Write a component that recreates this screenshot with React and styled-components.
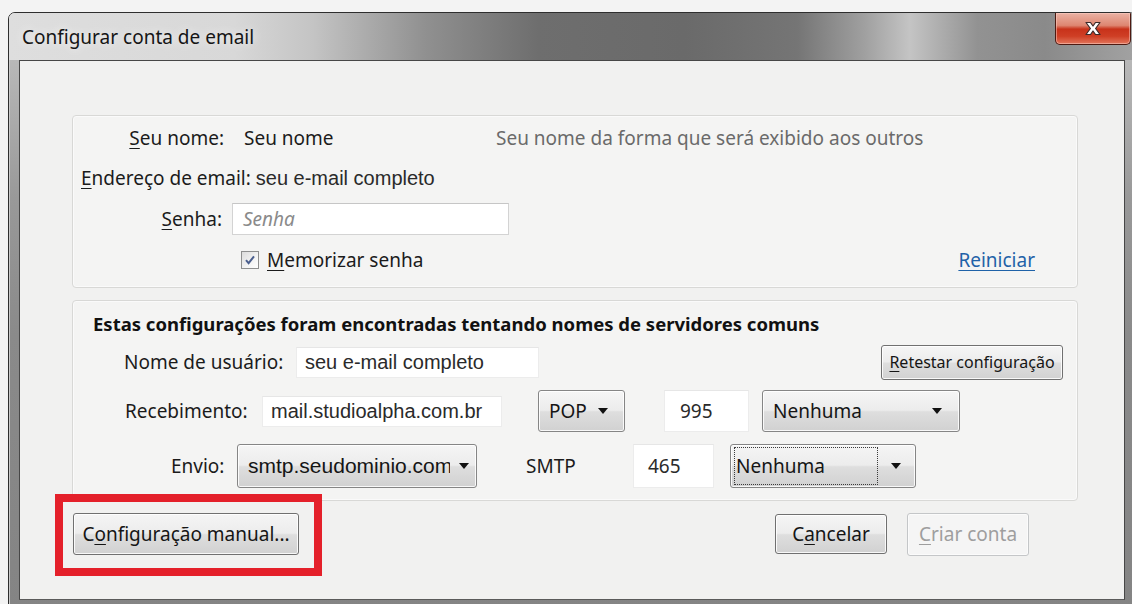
import React from 'react';
import styled, { createGlobalStyle } from 'styled-components';

const GlobalStyle = createGlobalStyle`
  html, body {
    margin: 0;
    padding: 0;
    background: #f3f3f3;
  }
  body {
    font-family: "Noto Sans", "Open Sans", sans-serif;
    overflow: hidden;
  }
`;

const Page = styled.div`
  width: 1132px;
  height: 604px;
  overflow: hidden;
  padding: 12px 0 0 8px;
  box-sizing: border-box;
`;

const DialogFrame = styled.div`
  width: 1128px;
  height: 600px;
  box-sizing: border-box;
  display: flex;
  flex-direction: column;
  border: 1px solid #2e2e2e;
  border-radius: 7px 7px 0 0;
  overflow: hidden;
`;

const TitleBar = styled.div`
  height: 47px;
  flex-shrink: 0;
  display: flex;
  justify-content: space-between;
  background: linear-gradient(90deg, #dedede 0%, #d8d8d8 20%, #c4c4c4 27%, #909090 37%, #6e6e6e 47%, #6a6a6a 60%, #757575 70%, #a0a0a0 76%, #c4c4c4 80%, #929292 86%, #8a8a8a 92%, #a2a2a2 100%);
`;

const FrameBody = styled.div`
  flex: 1;
  display: flex;
  padding: 0 10px 11px 10px;
  background: linear-gradient(180deg, #b8b8b8 0%, #999999 25%, #8a8a8a 50%, #848484 100%);
  box-shadow: inset 1px 0 0 #c9c9c9, inset -1px 0 0 #c9c9c9;
`;

const Title = styled.div`
  padding: 11px 0 0 13px;
  font-size: 19px;
  color: #151515;
  text-shadow: 0 0 10px rgba(255, 255, 255, 0.9);
`;

const CloseButton = styled.div`
  width: 76px;
  height: 32px;
  margin: 0 4px 0 0;
  box-sizing: border-box;
  display: flex;
  align-items: center;
  justify-content: center;
  border: 1px solid #4d1a12;
  border-top: none;
  border-radius: 0 0 5px 5px;
  background: linear-gradient(180deg, #eab2a4 0%, #de8671 40%, #c8321a 52%, #cf3f25 75%, #e2765c 100%);
  box-shadow: inset 0 0 0 1px rgba(255, 210, 200, 0.5);
`;

const Client = styled.div`
  flex: 1;
  border: 1px solid #474747;
  border-bottom-color: #5a5a5a;
  background: #f1f1f0;
  padding: 54px 46px 0 52px;
`;

const Group = styled.div`
  display: flex;
  flex-direction: column;
  border: 1px solid #d8d8d6;
  border-radius: 4px;
  background: #f4f4f3;
  box-shadow: inset 0 0 0 1px #fafafa;
  padding: ${p => p.$pad};
  margin-bottom: ${p => p.$gap || 0}px;
`;

const Row = styled.div`
  display: flex;
  align-items: center;
  height: ${p => p.$h}px;
  padding-left: ${p => p.$indent || 0}px;
  font-size: 19px;
  color: #1b1b1b;
`;

const FieldLabel = styled.span`
  flex-shrink: 0;
  width: ${p => p.$w}px;
  text-align: ${p => (p.$right ? 'right' : 'left')};
  padding-right: ${p => (p.$right ? 10 : 0)}px;
  box-sizing: border-box;
  white-space: nowrap;
`;

const Key = styled.u`
  text-decoration-thickness: 1px;
  text-underline-offset: 3px;
`;

const Plain = styled.span`
  font-family: "Liberation Sans", Arial, sans-serif;
  font-size: 20px;
  color: #2a2a2a;
`;

const Hint = styled.span`
  color: #6a6a6a;
  white-space: nowrap;
`;

const Heading = styled.div`
  font-weight: 700;
  font-size: 18.5px;
  color: #111;
  white-space: nowrap;
`;

const TextBox = styled.div`
  flex-shrink: 0;
  width: ${p => p.$w}px;
  height: ${p => p.$h || 31}px;
  margin-left: ${p => p.$ml || 0}px;
  box-sizing: border-box;
  display: flex;
  align-items: center;
  padding-left: ${p => p.$pl || 8}px;
  background: #fff;
  border: 1px solid ${p => (p.$framed ? '#d3d3d3' : '#ececec')};
  border-top-color: ${p => (p.$framed ? '#c6c6c6' : '#e6e6e6')};
  font-family: ${p => (p.$segoe ? '"Noto Sans", sans-serif' : '"Liberation Sans", Arial, sans-serif')};
  font-size: ${p => (p.$segoe ? 19 : 20)}px;
  font-style: ${p => (p.$placeholder ? 'italic' : 'normal')};
  color: ${p => (p.$placeholder ? '#8a8a8a' : '#2a2a2a')};
  white-space: nowrap;
  overflow: hidden;
`;

const buttonFace = `
  box-sizing: border-box;
  border: 1px solid #707070;
  border-radius: 3px;
  background: linear-gradient(180deg, #f5f5f5 0%, #ececec 48%, #dedede 52%, #d1d1d1 100%);
  box-shadow: inset 0 0 0 1px rgba(255, 255, 255, 0.85);
  color: #151515;
  white-space: nowrap;
`;

const Button = styled.div`
  ${buttonFace}
  flex-shrink: 0;
  width: ${p => p.$w}px;
  height: ${p => p.$h || 42}px;
  margin-left: ${p => p.$ml || 0}px;
  display: flex;
  align-items: center;
  justify-content: center;
  font-size: ${p => p.$fs || 19}px;
  ${p => p.$disabled && `
    border-color: #c4c6c8;
    background: #f5f5f5;
    box-shadow: inset 0 0 0 1px #fbfbfb;
    color: #9e9e9e;
  `}
`;

const Select = styled.div`
  ${buttonFace}
  flex-shrink: 0;
  width: ${p => p.$w}px;
  height: ${p => p.$h || 42}px;
  margin-left: ${p => p.$ml || 0}px;
  display: flex;
  align-items: center;
  padding: 0 ${p => p.$pr || 16}px 0 ${p => p.$pl || 10}px;
  border-color: #858585;
  font-family: ${p => (p.$arial ? '"Liberation Sans", Arial, sans-serif' : 'inherit')};
  font-size: ${p => (p.$arial ? 21 : 19)}px;
`;

const SelectText = styled.span`
  flex: ${p => (p.$clip ? `0 0 ${p.$clip}px` : 1)};
  overflow: hidden;
  ${p => p.$focused && `
    outline: 1px dotted #3a3a3a;
    padding: 5px 0 5px 1px;
    margin: 0 14px 0 -6px;
  `}
`;

const Caret = styled.span`
  flex-shrink: 0;
  width: 0;
  height: 0;
  margin-left: ${p => p.$ml || 0}px;
  border-left: 5px solid transparent;
  border-right: 5px solid transparent;
  border-top: 6px solid #111;
`;

const Check = styled.span`
  flex-shrink: 0;
  width: 18px;
  height: 18px;
  margin-right: 8px;
  box-sizing: border-box;
  border: 1px solid #8e8f8f;
  background: linear-gradient(135deg, #dcdcdc 0%, #f4f4f4 60%, #ffffff 100%);
  display: flex;
  align-items: center;
  justify-content: center;
`;

const Link = styled.a`
  margin: 0 42px 0 auto;
  color: #1f62a8;
  text-decoration: underline;
  text-underline-offset: 3px;
`;

const Footer = styled.div`
  display: flex;
  align-items: center;
  height: 42px;
  margin-top: 12px;
  padding: 0 49px 0 1px;
`;

const Highlighted = styled.div`
  position: relative;
  &::after {
    content: "";
    position: absolute;
    top: -19px;
    left: -18px;
    right: -23px;
    bottom: -21px;
    border: 8px solid #e4202a;
    pointer-events: none;
  }
`;

const Grow = styled.span`
  flex: 1;
`;

const CloseGlyph = () => (
  <svg width="20" height="15" viewBox="0 0 20 15">
    <path
      d="M3 1.5 L7.5 1.5 L10 5 L12.5 1.5 L17 1.5 L12.6 7.5 L17 13.5 L12.5 13.5 L10 10 L7.5 13.5 L3 13.5 L7.4 7.5 Z"
      fill="#ffffff"
      stroke="#3b2a2a"
      strokeWidth="1.2"
      strokeLinejoin="round"
    />
  </svg>
);

const CheckMark = () => (
  <svg width="12" height="12" viewBox="0 0 12 12">
    <path d="M2 6.2 L4.6 9.2 L10 2.4" fill="none" stroke="#4b5f8e" strokeWidth="2" />
  </svg>
);

const App = () => (
  <Page>
    <GlobalStyle />
    <DialogFrame>
      <TitleBar>
        <Title>Configurar conta de email</Title>
        <CloseButton>
          <CloseGlyph />
        </CloseButton>
      </TitleBar>

      <FrameBody>
        <Client>
          <Group $pad="0 0 9px 0" $gap={12}>
            <Row $h={44}>
              <FieldLabel $w={161} $right><Key>S</Key>eu nome:</FieldLabel>
              <FieldLabel $w={262} style={{ paddingLeft: 10 }}>Seu nome</FieldLabel>
              <Hint>Seu nome da forma que será exibido aos outros</Hint>
            </Row>
            <Row $h={36} $indent={8}>
              <Key>E</Key>ndereço de email:&nbsp;<Plain>seu e-mail completo</Plain>
            </Row>
            <Row $h={46}>
              <FieldLabel $w={159} $right><Key>S</Key>enha:</FieldLabel>
              <TextBox $w={277} $h={32} $framed $segoe $placeholder $pl={10}>Senha</TextBox>
            </Row>
            <Row $h={36} $indent={168}>
              <Check><CheckMark /></Check>
              <span><Key>M</Key>emorizar senha</span>
              <Link>Reiniciar</Link>
            </Row>
          </Group>

          <Group $pad="0 0 11px 0">
            <Row $h={44} $indent={20}>
              <Heading>Estas configurações foram encontradas tentando nomes de servidores comuns</Heading>
            </Row>
            <Row $h={34} $indent={51}>
              <FieldLabel $w={172}>Nome de usuário:</FieldLabel>
              <TextBox $w={243}>seu e-mail completo</TextBox>
              <Grow />
              <Button $w={182} $h={35} $fs={16} style={{ marginRight: 14 }}>
                <Key>R</Key>etestar configuração
              </Button>
            </Row>
            <Row $h={64} $indent={52}>
              <FieldLabel $w={137}>Recebimento:</FieldLabel>
              <TextBox $w={240}>mail.studioalpha.com.br</TextBox>
              <Select $w={87} $ml={36} $pr={16}>
                <SelectText>POP</SelectText>
                <Caret />
              </Select>
              <TextBox $w={85} $h={42} $ml={39} $segoe $pl={15}>995</TextBox>
              <Select $w={198} $ml={13} $pr={17}>
                <SelectText>Nenhuma</SelectText>
                <Caret />
              </Select>
            </Row>
            <Row $h={46} $indent={98}>
              <FieldLabel $w={66}>Envio:</FieldLabel>
              <Select $w={240} $h={44} $arial $pr={9}>
                <SelectText $clip={202}>smtp.seudominio.com</SelectText>
                <Caret $ml={9} />
              </Select>
              <FieldLabel $w={156} style={{ paddingLeft: 49 }}>SMTP</FieldLabel>
              <TextBox $w={81} $h={44} $segoe $pl={14}>465</TextBox>
              <Select $w={186} $h={44} $ml={16} $pr={14}>
                <SelectText $focused>Nenhuma</SelectText>
                <Caret />
              </Select>
            </Row>
          </Group>

          <Footer>
            <Highlighted>
              <Button $w={226}>C<Key>o</Key>nfiguração manual...</Button>
            </Highlighted>
            <Grow />
            <Button $w={112} $h={40}>C<Key>a</Key>ncelar</Button>
            <Button $w={122} $h={43} $ml={20} $disabled><Key>C</Key>riar conta</Button>
          </Footer>
        </Client>
      </FrameBody>
    </DialogFrame>
  </Page>
);

export default App;
